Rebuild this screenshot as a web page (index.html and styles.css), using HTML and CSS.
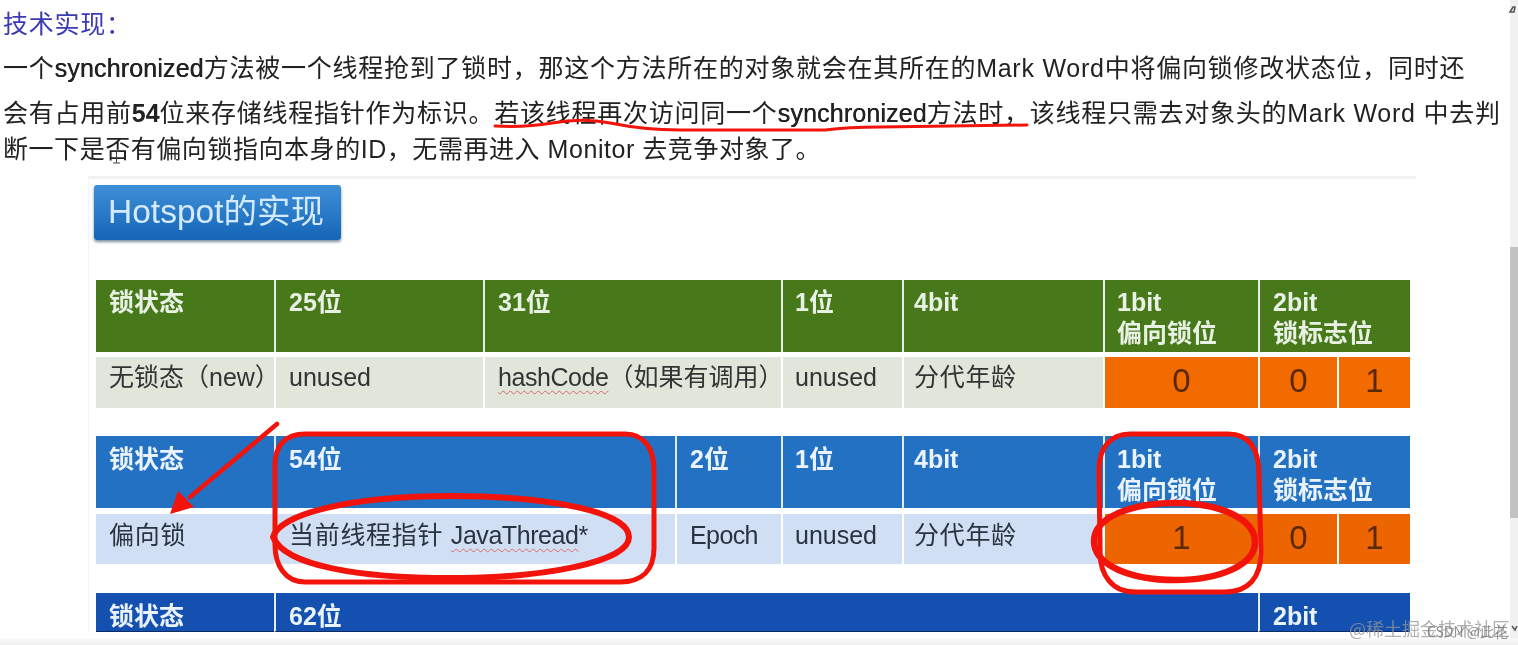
FILE: index.html
```html
<!DOCTYPE html>
<html lang="zh-CN">
<head>
<meta charset="utf-8">
<title>技术实现</title>
<link rel="stylesheet" href="styles.css">
</head>
<body>
<div class="frame">
  <div class="main">
    <div class="content">
      <div class="article">
        <div class="line heading">技术实现&#xFF1A;</div>
        <div class="line first">一个<span class="semi">synchronized</span>方法被一个线程抢到了锁时&#xFF0C;那这个方法所在的对象就会在其所在的Mark Word中将偏向锁修改状态位&#xFF0C;同时还</div>
        <div class="line second">会有占用前<b>54</b>位来存储线程指针作为标识。若该线程再次访问同一个<span class="semi">synchronized</span>方法时&#xFF0C;该线程只需去对象头的Mark Word 中去判</div>
        <div class="line third">断一下是否有偏向锁指向本身的ID&#xFF0C;无需再进入 Monitor 去竞争对象了。</div>
      </div>
      <div class="slide">
        <div class="title-btn">Hotspot的实现</div>
        <div class="table green cols-a">
          <div class="th">锁状态</div><div class="th">25位</div><div class="th">31位</div><div class="th tight-1">1位</div><div class="th tight-3">4bit</div><div class="th tight-1">1bit<br>偏向锁位</div><div class="th span2">2bit<br>锁标志位</div>
          <div class="td fit">无锁态&#xFF08;new&#xFF09;</div><div class="td">unused</div><div class="td fit"><span class="wavy">hashCode</span>&#xFF08;如果有调用&#xFF09;</div><div class="td tight-1">unused</div><div class="td cn tight-3">分代年龄</div><div class="td num">0</div><div class="td num">0</div><div class="td num">1</div>
        </div>
        <div class="table blue cols-b">
          <div class="th">锁状态</div><div class="th">54位</div><div class="th">2位</div><div class="th tight-1">1位</div><div class="th tight-3">4bit</div><div class="th tight-1">1bit<br>偏向锁位</div><div class="th span2">2bit<br>锁标志位</div>
          <div class="td cn">偏向锁</div><div class="td"><span class="cn">当前线程指针 </span><span class="wavy">JavaThread</span>*</div><div class="td narrow">Epoch</div><div class="td tight-1">unused</div><div class="td cn tight-3">分代年龄</div><div class="td num">1</div><div class="td num">0</div><div class="td num">1</div>
        </div>
        <div class="table navy cols-c">
          <div class="th">锁状态</div><div class="th">62位</div><div class="th">2bit</div>
        </div>
      </div>
    </div>
    <div class="scrollbar"><div class="thumb"></div></div>
  </div>
  <div class="bottom-bar"></div>

  <svg class="ink" viewBox="0 0 1518 645" aria-hidden="true">
    <g fill="none" stroke="#f2140a" stroke-linecap="round" stroke-linejoin="round">
      <path stroke-width="3" d="M495 126C515 127 535 126 552 123C570 120 590 119 610 123C630 127 650 130 680 130L825 130C840 128 860 127 880 127L950 126L1027 125"/>
      <path stroke-width="4.5" d="M277 424L190 497"/>
      <path stroke-width="5" d="M305 434L625 434C645 434 654 450 654 470L654 548C654 570 642 582 620 582L305 582C285 582 275 565 275 545L275 465C275 446 285 434 305 434Z"/>
      <path stroke-width="6" d="M273 537C280 514 350 496 450 496C550 496 629 512 629 537C629 562 545 578 450 578C360 578 285 566 273 537Z"/>
      <path stroke-width="5" d="M1130 434L1228 434C1250 434 1259 450 1259 475L1261 552C1261 578 1248 592 1225 592L1135 592C1112 592 1100 575 1100 552L1099 470C1099 448 1110 434 1130 434Z"/>
      <path stroke-width="6.5" d="M1094 541C1094 518 1130 503 1175 503C1222 503 1255 520 1255 542C1255 565 1220 580 1175 580C1130 580 1094 565 1094 541Z"/>
    </g>
    <polygon class="ink-fill" points="170,514 178,491 194,507"/>
    <path class="cursor" d="M113 151h7M116.5 151v12M113 163h7"/>
    <path class="chevron" d="M1510 12l3-5 2 0-1 5z"/>
    <path class="chevron" d="M1512 626l3 4 2-4"/>
  </svg>
  <div class="watermark">@稀土掘金技术社区<span class="watermark-extra">CSDN @此花</span></div>
</div>
</body>
</html>
```
FILE: styles.css
```css
* { box-sizing: border-box; }
html, body { margin: 0; padding: 0; background: #fff; overflow: hidden; }
body { font-family: "Liberation Sans", "Noto Sans CJK SC", sans-serif; color: #1c1c1c; }

.frame { position: relative; width: 1518px; height: 645px; display: flex; flex-direction: column; overflow: hidden; filter: blur(0.5px); }
.main { flex: 1; min-height: 0; display: flex; }
.content { flex: 1; min-width: 0; overflow: hidden; }
.scrollbar { width: 8px; background: #f1f1f1; padding-top: 247px; }
.thumb { height: 271px; background: #c2c2c2; }
.bottom-bar { height: 7px; background: linear-gradient(#fafafa, #efefef); }

.article { padding-left: 3px; font-size: 25px; letter-spacing: 0.75px; white-space: nowrap; }
.line { color: #222; }
.heading { height: 48px; line-height: 48px; color: #3a3ab4; }
.first { height: 40px; line-height: 40px; }
.second { height: 50px; line-height: 50px; }
.third { height: 32px; line-height: 32px; margin-top: -5px; letter-spacing: 0.55px; }
.semi { text-shadow: 0.4px 0 0 currentColor; letter-spacing: 0.15px; }
.article b { font-weight: 700; letter-spacing: 0; }

.slide { margin: 11px 0 0 88px; width: 1328px; border-top: 3px solid #f2f2f2; border-left: 1px solid #f4f4f4; padding: 6px 0 0 7px; }
.title-btn { margin-left: -2px; width: 247px; height: 55px; border-radius: 3px; background: linear-gradient(#3f90d8, #1565b8); box-shadow: 0 2px 3px #7f8f9f; color: #d4eaff; font-size: 33.5px; line-height: 54px; padding-left: 14px; white-space: nowrap; }

.table { display: grid; width: 1314px; grid-template-rows: 72px 51px; row-gap: 5px; margin-top: 28px; font-size: 25px; white-space: nowrap; }
.green { margin-top: 40px; }
.blue { grid-template-rows: 72px 50px; row-gap: 6px; }
.cols-a { grid-template-columns: 178px 209px 298px 121px 201px 155px 79px 73px; }
.cols-b { grid-template-columns: 178px 401px 106px 121px 201px 155px 79px 73px; }
.cols-c { grid-template-columns: 178px 984px 152px; margin-top: 29px; grid-template-rows: 39px; }
.th { padding: 7px 0 0 13px; line-height: 31px; color: #e9f1e4; font-weight: 700; border-left: 2px solid #e4ecee; min-width: 0; }
.table .th:first-child { border-left: 0; }
.blue .th, .navy .th { padding-top: 8px; }
.span2 { grid-column: span 2; }
.td { padding: 4px 0 0 13px; line-height: 32px; color: #333; border-left: 2px solid #fff; min-width: 0; }
.blue .td { padding-top: 5px; }
.green .td:nth-child(8), .blue .td:nth-child(8) { border-left: 0; }
.cn { letter-spacing: 0.7px; }
.fit { letter-spacing: 0; }
.narrow { letter-spacing: -0.6px; }
.th.tight-1, .td.tight-1 { padding-left: 12px; }
.th.tight-3, .td.tight-3 { padding-left: 10px; }
.td.num { padding: 7px 0 0; text-align: center; font-size: 33px; line-height: 34px; font-weight: 400; }
.wavy { letter-spacing: -0.45px; text-decoration: underline wavy #d96a6a 1px; text-underline-offset: 4px; }

.green .th { background: #47791a; }
.green .td { background: #e0e6da; }
.blue .th { background: #2271c3; color: #eaf2fb; }
.blue .td { background: #d0dff3; color: #2a3340; }
.navy .th { background: #1450b0; color: #eaf2fb; border-bottom: 1px solid #0c2c68; }
.table .num { background: #f26b00; color: #5a2800; }
.table.blue .num { background: #ec6500; color: #5a2800; }

.ink { position: absolute; left: 0; top: 0; width: 1518px; height: 645px; pointer-events: none; }
.ink-fill { fill: #f2140a; }
.cursor { fill: none; stroke: #444; stroke-width: 1; }
.chevron { fill: none; stroke: #555; stroke-width: 1.5; }

.watermark { position: absolute; right: 8px; top: 615px; font-size: 18px; line-height: 26px; color: rgba(150, 150, 150, 0.75); font-family: "Noto Sans CJK SC", sans-serif; white-space: nowrap; }
.watermark-extra { position: absolute; right: 2px; top: 3px; font-size: 14px; color: rgba(120, 120, 120, 0.8); }
```
